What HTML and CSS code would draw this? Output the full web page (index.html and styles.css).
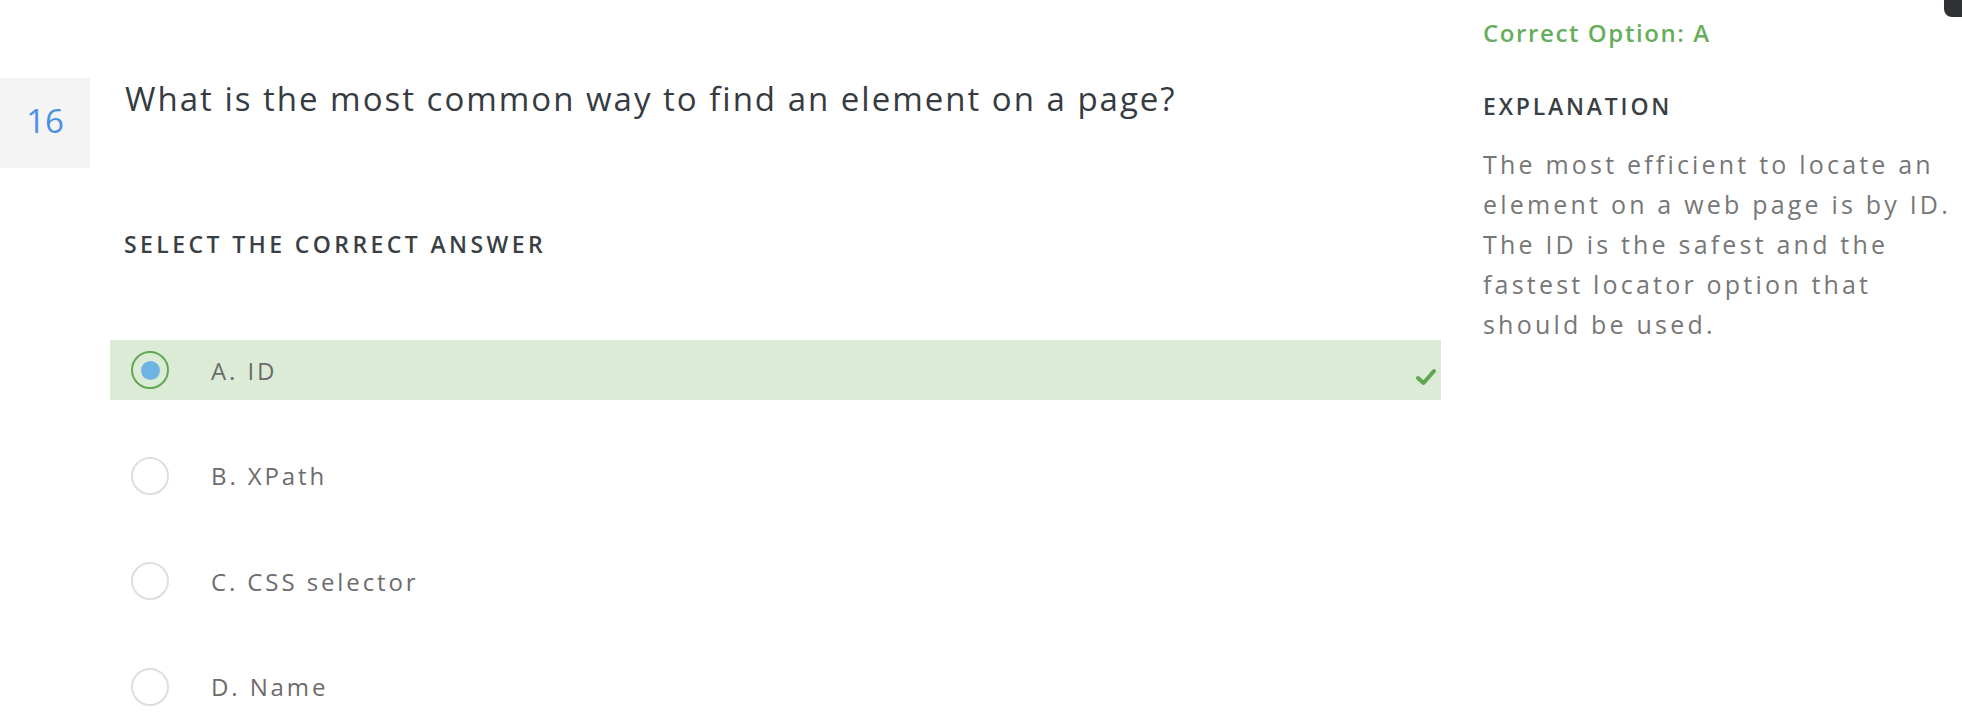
FILE: index.html
```html
<!DOCTYPE html>
<html>
<head>
<meta charset="utf-8">
<link rel="stylesheet" href="styles.css">
</head>
<body>
<div class="corner"></div>
<div class="page">
  <div class="left">
    <div class="num">16</div>
    <div class="content">
      <h1 class="question">What is the most common way to find an element on a page?</h1>
      <h2 class="select-title">SELECT THE CORRECT ANSWER</h2>
      <ul class="options">
        <li class="option correct">
          <span class="radio checked"><span class="dot"></span></span>
          <span class="label">A. ID</span>
          <svg class="check" width="20" height="18" viewBox="0 0 20 18"><path d="M2 10 L7.5 15 L18 3" fill="none" stroke="#5fa852" stroke-width="4" stroke-linecap="round" stroke-linejoin="round"/></svg>
        </li>
        <li class="option">
          <span class="radio"></span>
          <span class="label">B. XPath</span>
        </li>
        <li class="option">
          <span class="radio"></span>
          <span class="label">C. CSS selector</span>
        </li>
        <li class="option">
          <span class="radio"></span>
          <span class="label">D. Name</span>
        </li>
      </ul>
    </div>
  </div>
  <div class="right">
    <div class="correct-option">Correct Option: A</div>
    <h3 class="exp-title">EXPLANATION</h3>
    <p class="exp-text">The most efficient to locate an element on a web page is by ID. The ID is the safest and the fastest locator option that should be used.</p>
  </div>
</div>
</body>
</html>
```
FILE: styles.css
```css
* { box-sizing: border-box; }
html, body {
  margin: 0;
  padding: 0;
  background: #fff;
  font-family: "Open Sans", "Noto Sans", sans-serif;
}
body { position: relative; overflow: hidden; height: 728px; }
.corner {
  position: absolute;
  top: 0;
  right: 0;
  width: 18px;
  height: 17px;
  background: #2f3134;
  border-bottom-left-radius: 8px;
}
.page {
  display: flex;
  align-items: flex-start;
}
.left {
  display: flex;
  align-items: flex-start;
  padding-top: 78px;
  width: 1483px;
  flex: none;
}
.num {
  width: 90px;
  height: 90px;
  background: #f4f4f4;
  color: #4a8fe6;
  font-size: 33px;
  display: flex;
  align-items: center;
  justify-content: center;
  padding-bottom: 6px;
  flex: none;
}
.content {
  margin-left: 20px;
  width: 1331px;
}
.question {
  margin: 1px 0 0 15px;
  font-weight: 400;
  font-size: 33px;
  line-height: 40px;
  letter-spacing: 2px;
  color: #363b42;
}
.select-title {
  margin: 110px 0 0 14px;
  font-weight: 600;
  font-size: 23px;
  line-height: 30px;
  letter-spacing: 3.4px;
  color: #3a3f45;
}
.options {
  list-style: none;
  margin: 81px 0 0 0;
  padding: 0;
  display: flex;
  flex-direction: column;
  gap: 45.5px;
}
.option {
  height: 60px;
  display: flex;
  align-items: center;
  padding-left: 21px;
  padding-right: 5px;
}
.option.correct { background: #dcebd6; }
.radio {
  width: 38px;
  height: 38px;
  border-radius: 50%;
  border: 2px solid #dedede;
  background: #fff;
  display: flex;
  align-items: center;
  justify-content: center;
  flex: none;
}
.radio.checked { border-color: #5fa852; background: transparent; }
.dot {
  width: 19px;
  height: 19px;
  border-radius: 50%;
  background: #6fb3e3;
}
.label {
  margin-left: 42px;
  font-size: 24px;
  letter-spacing: 2.9px;
  color: #6c6c6c;
  flex: 1;
}
.check { flex: none; margin-top: 14px; }
.right {
  padding-top: 17px;
  width: 472px;
  flex: none;
}
.correct-option {
  font-size: 24px;
  font-weight: 600;
  letter-spacing: 1.6px;
  color: #67ae5c;
  line-height: 32px;
}
.exp-title {
  margin: 42px 0 0 0;
  font-size: 23px;
  font-weight: 600;
  letter-spacing: 2.8px;
  color: #3a3f45;
  line-height: 30px;
}
.exp-text {
  margin: 23px 0 0 0;
  font-size: 25px;
  line-height: 40px;
  letter-spacing: 3.2px;
  color: #777;
}
```
